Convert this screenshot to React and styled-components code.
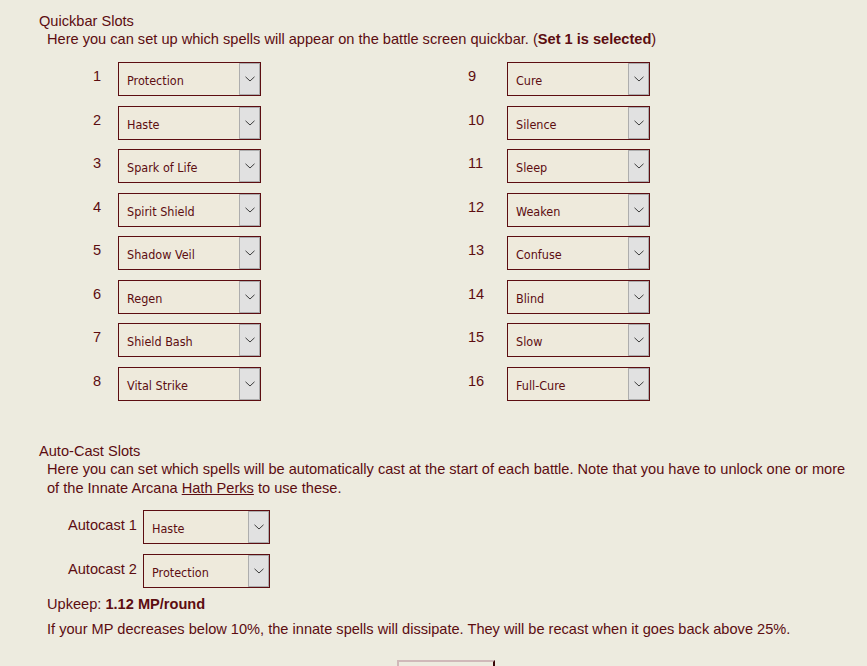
import React from "react";
import styled, { createGlobalStyle } from "styled-components";

const GlobalStyle = createGlobalStyle`
  html, body {
    margin: 0;
    padding: 0;
    background: #edebdf;
  }
  body {
    font-family: "Liberation Sans", Arial, sans-serif;
    color: #5c0d11;
    overflow: hidden;
  }
`;

const quickbar = [
  ["Protection", "Haste", "Spark of Life", "Spirit Shield", "Shadow Veil", "Regen", "Shield Bash", "Vital Strike"],
  ["Cure", "Silence", "Sleep", "Weaken", "Confuse", "Blind", "Slow", "Full-Cure"],
];

const autocast = ["Haste", "Protection"];

const Page = styled.div`
  width: 867px;
  height: 666px;
  padding-top: 13px;
  box-sizing: border-box;
  font-size: 14.6px;
`;

const Section = styled.div`
  padding-left: 39px;
  margin-top: ${(p) => p.$top || 0}px;
`;

const Title = styled.div`
  line-height: 17px;
`;

const Desc = styled.div`
  padding-left: 8px;
  line-height: 19px;
  max-width: 808px;

  a {
    color: inherit;
    text-decoration: underline;
  }
`;

const Columns = styled.div`
  display: flex;
  gap: 207px;
  margin-top: 13px;
  padding-left: 93px;
`;

const SlotColumn = styled.div`
  display: grid;
  grid-template-columns: ${(p) => p.$numWidth}px 143px;
  grid-auto-rows: 34px;
  row-gap: 9.57px;
`;

const Num = styled.div`
  padding-top: 6px;
  line-height: 17px;
`;

const SelectBox = styled.div`
  display: flex;
  align-items: stretch;
  width: ${(p) => p.$width}px;
  height: 34px;
  box-sizing: border-box;
  border: 1px solid #5c0d11;
  background: #eeeadc;
`;

const Value = styled.span`
  flex: 1;
  display: flex;
  align-items: center;
  padding: 3px 0 0 8px;
  font-family: "DejaVu Sans Condensed", "DejaVu Sans", sans-serif;
  font-stretch: condensed;
  font-size: 12.5px;
  color: #5c0d11;
`;

const Arrow = styled.span`
  width: 21px;
  box-sizing: border-box;
  border: 1px solid #adadad;
  background: #e1e1e1;
  display: flex;
  align-items: center;
  justify-content: center;
`;

const AutoRows = styled.div`
  display: grid;
  grid-template-columns: 75px 127px;
  grid-auto-rows: 34px;
  row-gap: 10px;
  margin-top: 12px;
  padding-left: 29px;
`;

const Label = styled.div`
  padding-top: 7px;
  line-height: 17px;
`;

const Note = styled.div`
  padding-left: 8px;
  line-height: 17px;
  margin-top: ${(p) => p.$top}px;

  b {
    font-weight: bold;
  }
`;

const ButtonRow = styled.div`
  display: flex;
  padding-left: 397px;
  margin-top: 22px;
`;

const Button = styled.button`
  width: 98px;
  height: 30px;
  border-style: solid;
  border-width: 2px;
  border-color: #d0b9b9 #3a0608 #3a0608 #d0b9b9;
  background: #edebdf;
`;

const Chevron = () => (
  <svg width="10" height="6" viewBox="0 0 10 6">
    <polyline points="0.5,0.8 5,5 9.5,0.8" fill="none" stroke="#3c3c3c" strokeWidth="1" />
  </svg>
);

const Select = ({ value, width }) => (
  <SelectBox $width={width}>
    <Value>{value}</Value>
    <Arrow>
      <Chevron />
    </Arrow>
  </SelectBox>
);

const App = () => {
  return (
    <Page>
      <GlobalStyle />
      <Section>
        <Title>Quickbar Slots</Title>
        <Desc>
          Here you can set up which spells will appear on the battle screen quickbar. (<b>Set 1 is selected</b>)
        </Desc>
      </Section>

      <Columns>
        {quickbar.map((col, ci) => (
          <SlotColumn key={ci} $numWidth={ci === 0 ? 25 : 39}>
            {col.map((spell, i) => (
              <React.Fragment key={spell}>
                <Num>{ci * 8 + i + 1}</Num>
                <Select value={spell} width={143} />
              </React.Fragment>
            ))}
          </SlotColumn>
        ))}
      </Columns>

      <Section $top={42}>
        <Title>Auto-Cast Slots</Title>
        <Desc>
          Here you can set which spells will be automatically cast at the start of each battle. Note that you have to unlock one or more of the Innate Arcana <a href="#perks">Hath Perks</a> to use these.
        </Desc>
        <AutoRows>
          {autocast.map((spell, i) => (
            <React.Fragment key={spell}>
              <Label>Autocast {i + 1}</Label>
              <Select value={spell} width={127} />
            </React.Fragment>
          ))}
        </AutoRows>
        <Note $top={8}>
          Upkeep: <b>1.12 MP/round</b>
        </Note>
        <Note $top={8}>
          If your MP decreases below 10%, the innate spells will dissipate. They will be recast when it goes back above 25%.
        </Note>
      </Section>

      <ButtonRow>
        <Button />
      </ButtonRow>
    </Page>
  );
};

export default App;
